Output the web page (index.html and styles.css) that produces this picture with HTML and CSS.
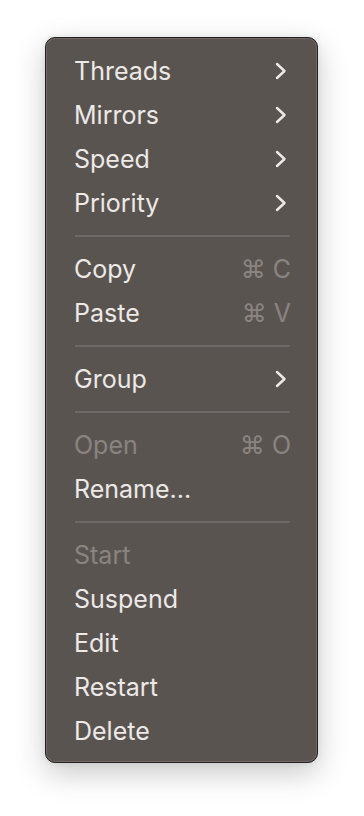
FILE: index.html
```html
<!DOCTYPE html>
<html lang="en">
<head>
    <meta charset="UTF-8">
    <meta name="viewport" content="width=device-width, initial-scale=1.0">
    <title>Context menu</title>
    <link rel="stylesheet" href="styles.css">
</head>
<body>
    <div class="menu">
        <div class="menu-item">Threads <svg class="chevron" viewBox="0 0 12 18"><polyline points="2,2 9.5,9 2,16"/></svg></div>
        <div class="menu-item">Mirrors <svg class="chevron" viewBox="0 0 12 18"><polyline points="2,2 9.5,9 2,16"/></svg></div>
        <div class="menu-item">Speed <svg class="chevron" viewBox="0 0 12 18"><polyline points="2,2 9.5,9 2,16"/></svg></div>
        <div class="menu-item">Priority <svg class="chevron" viewBox="0 0 12 18"><polyline points="2,2 9.5,9 2,16"/></svg></div>
        <div class="separator"></div>
        <div class="menu-item">Copy <span class="shortcut">⌘ C</span></div>
        <div class="menu-item">Paste <span class="shortcut">⌘ V</span></div>
        <div class="separator"></div>
        <div class="menu-item">Group <svg class="chevron" viewBox="0 0 12 18"><polyline points="2,2 9.5,9 2,16"/></svg></div>
        <div class="separator"></div>
        <div class="menu-item disabled">Open <span class="shortcut">⌘ O</span></div>
        <div class="menu-item">Rename...</div>
        <div class="separator"></div>
        <div class="menu-item disabled">Start</div>
        <div class="menu-item">Suspend</div>
        <div class="menu-item">Edit</div>
        <div class="menu-item">Restart</div>
        <div class="menu-item">Delete</div>
    </div>
</body>
</html>
```

FILE: styles.css
```css
body {
    margin: 0;
    padding: 0;
    min-height: 816px;
    background-color: #ffffff;
    font-family: 'Inter', 'Roboto', sans-serif;
}
.menu {
    width: 273px;
    box-sizing: border-box;
    margin: 37px 0 0 45px;
    padding: 11px 28px 9px 28px;
    background-color: #5a5451;
    border: 1px solid #232120;
    border-radius: 10px;
    box-shadow: inset 0 0 0 1px #6f6865, 0 10px 30px rgba(0, 0, 0, 0.22), 0 0 6px rgba(0, 0, 0, 0.08);
}
.menu-item {
    display: flex;
    justify-content: space-between;
    align-items: center;
    height: 44px;
    font-size: 25px;
    color: #ece9e7;
}
.menu-item.disabled {
    color: #8a8481;
}
.shortcut {
    color: #8a8481;
    font-size: 25px;
    margin-right: -2px;
}
.chevron {
    width: 12px;
    height: 18px;
    margin-right: 2px;
    fill: none;
    stroke: #ece9e7;
    stroke-width: 2.4;
    stroke-linecap: round;
    stroke-linejoin: round;
}
.separator {
    height: 2px;
    margin: 10px -1px 10px 1px;
    background-color: #6f6866;
}
```
